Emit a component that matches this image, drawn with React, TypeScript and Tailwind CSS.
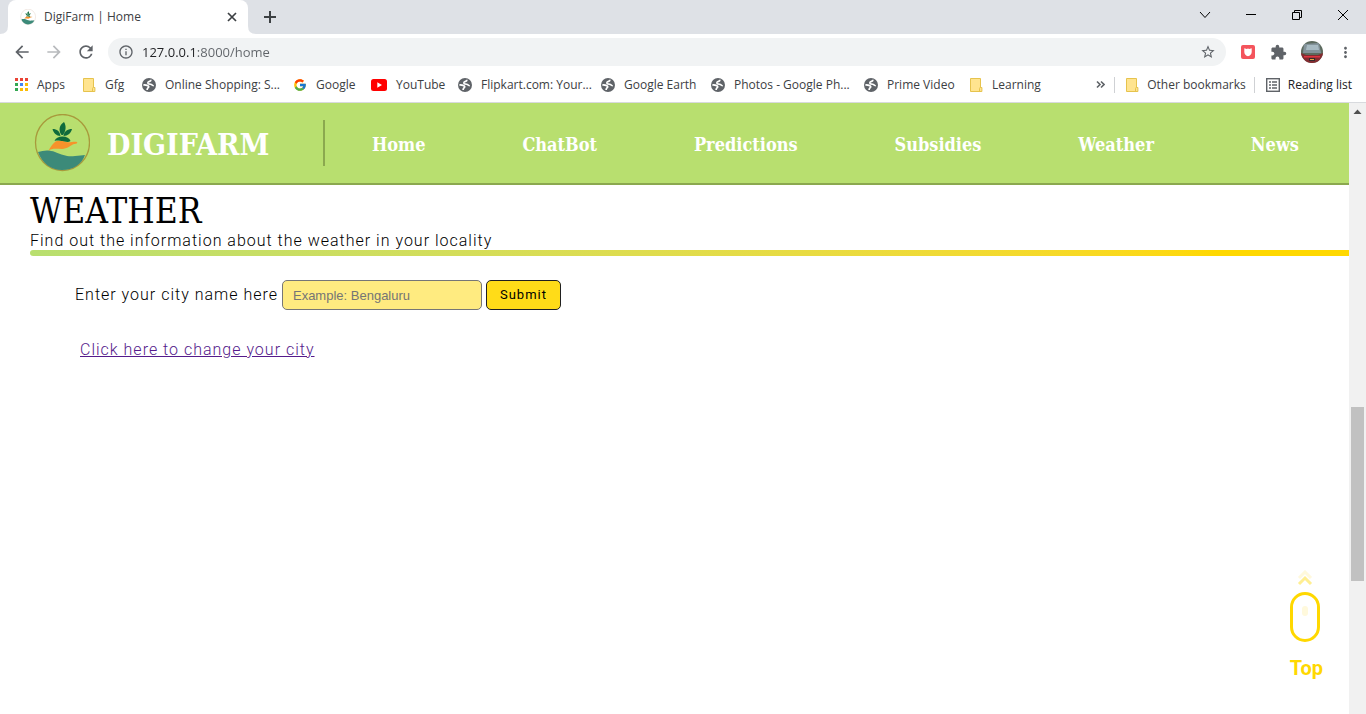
import React from "react";
import {
  MdArrowBack,
  MdArrowForward,
  MdExtension,
  MdInfoOutline,
  MdMoreVert,
  MdRefresh,
  MdStarBorder,
} from "react-icons/md";
import { FcGoogle } from "react-icons/fc";

function FarmLogo({ className, ring = "#a89a3c", fill = "none" }: { className: string; ring?: string; fill?: string }) {
  return (
    <svg className={className} viewBox="0 0 56 58" aria-hidden="true">
      <ellipse cx="28.500" cy="28.500" rx="27" ry="28" fill={fill} stroke={ring} strokeWidth="1.3" />
      <path d="M4 38c6-2 12-2 17 0 8 3 12 5 20 4 4 0 7-1 10-1-3 9-12 15-23 15C17 56 8 49 4 38z" fill="#3c8a79" />
      <path d="M14 37c2-2 3-6 7-9 3-2 8-1 11 0 4 1 8-1 11 0 1 1-1 2-3 2-3 1-7 5-12 5-6 0-10-1-14 2z" fill="#f7922b" />
      <path d="M20.500 27c1-3 4-4.500 8-4.500s7 1.500 8 4.500c-3 2-6 0-8 0s-5-1-8 0z" fill="#0f6b3c" />
      <path d="M27.500 21c-3.500-5-2-10 2.500-13 2.500 4 2 9-1 13zM26.500 22c-4 0-7-3-8-7 4.500 0 7.500 2.500 8 7zM29.500 22c.5-4.500 4-7 8.500-7-1 4-4 7-8.500 7z" fill="#0f6b3c" />
    </svg>
  );
}

function Globe() {
  return (
    <svg className="size-[14px]" viewBox="0 0 14 14" aria-hidden="true">
      <circle cx="7" cy="7" r="7" fill="#5f6368" />
      <path
        d="M9 1.800C9 3 8.300 3.300 7 3.600c-1.500.4-1.500 2-.3 2.300l1.800.3c1.600.3 2 1.400 3.300 1.600"
        fill="none"
        stroke="#fff"
        strokeWidth="1.600"
      />
      <path d="M1.400 6.800c2 .2 4.800.2 5.300 1.800.3 1.200-1.500 1-1.600 3.400" fill="none" stroke="#fff" strokeWidth="1.700" />
    </svg>
  );
}

function Folder() {
  return (
    <svg className="h-[14px] w-[13px]" viewBox="0 0 13 14" aria-hidden="true">
      <path d="M.5.5h10v9h1.400v4H.5z" fill="#ffe48f" stroke="#e6c34d" />
      <path d="M9.500 13.500V10.500q0-1 1-1" fill="none" stroke="#e6c34d" />
    </svg>
  );
}

function AppsGrid() {
  const colors = ["#ea4335", "#ea4335", "#ea4335", "#34a853", "#4285f4", "#fbbc05", "#34a853", "#fbbc05", "#fbbc05"];
  return (
    <svg className="size-[13px]" viewBox="0 0 13 13" aria-hidden="true">
      {colors.map((c, i) => (
        <rect key={i} x={(i % 3) * 5} y={Math.floor(i / 3) * 5} width="3" height="3" fill={c} />
      ))}
    </svg>
  );
}

function YouTube() {
  return (
    <svg className="h-[12px] w-[16px]" viewBox="0 0 16 12" aria-hidden="true">
      <rect width="16" height="12" rx="2.500" fill="#f00" />
      <path d="M6.300 3.300v5.400L11 6z" fill="#fff" />
    </svg>
  );
}

const bookmarks = [
  { label: "Apps", icon: <AppsGrid />, width: "w-[68px]" },
  { label: "Gfg", icon: <Folder />, width: "w-[59px]" },
  { label: "Online Shopping: S...", icon: <Globe />, width: "w-[151px]" },
  { label: "Google", icon: <FcGoogle className="size-[14px]" aria-hidden="true" />, width: "w-[78px]" },
  { label: "YouTube", icon: <YouTube />, width: "w-[87px]" },
  { label: "Flipkart.com: Your...", icon: <Globe />, width: "w-[143px]" },
  { label: "Google Earth", icon: <Globe />, width: "w-[110px]" },
  { label: "Photos - Google Ph...", icon: <Globe />, width: "w-[153px]" },
  { label: "Prime Video", icon: <Globe />, width: "w-[106px]" },
  { label: "Learning", icon: <Folder />, width: "w-[80px]" },
];

function TabStrip() {
  return (
    <div className="flex h-[34px] bg-[#dee1e6] pl-2">
      <div className="relative flex w-[240px] items-center rounded-t-lg bg-white pl-3 pr-[11px]">
        <svg className="absolute -left-2 bottom-0 size-2" viewBox="0 0 8 8" aria-hidden="true">
          <path d="M8 0v8H0q8 0 8-8z" fill="#fff" />
        </svg>
        <svg className="absolute -right-2 bottom-0 size-2" viewBox="0 0 8 8" aria-hidden="true">
          <path d="M0 0v8h8Q0 8 0 0z" fill="#fff" />
        </svg>
        <FarmLogo className="size-4" ring="#d9c3b5" fill="#fff" />
        <span className="ml-2 flex-1 whitespace-nowrap text-[12px]">DigiFarm | Home</span>
        <button aria-label="Close tab" className="text-[#3c4043]">
          <svg className="size-[10px]" viewBox="0 0 10 10" aria-hidden="true">
            <path d="M1 1l8 8M9 1L1 9" stroke="currentColor" strokeWidth="1.700" />
          </svg>
        </button>
      </div>
      <button aria-label="New tab" className="ml-4 text-[#3c4043]">
        <svg className="size-3" viewBox="0 0 12 12" aria-hidden="true">
          <path d="M6 0v12M0 6h12" stroke="currentColor" strokeWidth="2" />
        </svg>
      </button>
      <div className="mb-[5px] ml-auto flex text-black">
        <button aria-label="Search tabs" className="grid w-[46px] place-items-center">
          <svg className="size-[12px]" viewBox="0 0 12 12" aria-hidden="true">
            <path d="M1 3l5 5.500L11 3" fill="none" stroke="currentColor" />
          </svg>
        </button>
        <button aria-label="Minimize" className="grid w-[46px] place-items-center">
          <svg className="size-[10px]" viewBox="0 0 10 10" aria-hidden="true">
            <path d="M0 4.500h10" stroke="currentColor" />
          </svg>
        </button>
        <button aria-label="Restore" className="grid w-[46px] place-items-center">
          <svg className="size-[10px]" viewBox="0 0 10 10" aria-hidden="true">
            <path d="M.5 2.500h7v7h-7zM2.500 2.500v-2h7v7h-2" fill="none" stroke="currentColor" />
          </svg>
        </button>
        <button aria-label="Close" className="grid w-[46px] place-items-center">
          <svg className="size-[10px]" viewBox="0 0 10 10" aria-hidden="true">
            <path d="M0 0l10 10M10 0L0 10" stroke="currentColor" />
          </svg>
        </button>
      </div>
    </div>
  );
}

function Toolbar() {
  return (
    <div className="flex h-9 items-center pl-3 pr-3 text-[#5f6368]">
      <button aria-label="Back" className="w-8">
        <MdArrowBack className="size-5" />
      </button>
      <button aria-label="Forward" className="w-8 text-[#b8babd]">
        <MdArrowForward className="size-5" />
      </button>
      <button aria-label="Reload" className="w-8">
        <MdRefresh className="size-5" />
      </button>
      <div className="flex h-7 flex-1 items-center rounded-full bg-[#f1f3f4] px-[10px]">
        <MdInfoOutline className="size-4" />
        <input
          aria-label="Address"
          defaultValue="127.0.0.1:8000/home"
          className="ml-2 min-w-0 flex-1 bg-linear-to-r from-[#202124] from-[55px] to-[#5f6368] to-[55px] bg-clip-text text-[13px] leading-5 text-transparent caret-[#202124] outline-none"
        />
        <button aria-label="Bookmark this page">
          <MdStarBorder className="size-4" />
        </button>
      </div>
      <div className="ml-[14px] flex items-center gap-[14px]">
        <button aria-label="Pocket">
          <svg className="size-4" viewBox="0 0 16 16" aria-hidden="true">
            <rect x="1" y="1" width="14" height="14" rx="2" fill="#f4545c" />
            <path d="M4.300 4.300l2.500.6L8 4.500l1.200.4 2.500-.6V8c0 2.200-1.600 3.700-3.700 4.200C5.900 11.700 4.300 10.200 4.300 8z" fill="#fff" />
          </svg>
        </button>
        <button aria-label="Extensions">
          <MdExtension className="size-[17px]" />
        </button>
        <button aria-label="Profile">
          <svg className="size-[22px]" viewBox="0 0 22 22" aria-hidden="true">
            <defs>
              <clipPath id="avatar">
                <circle cx="11" cy="11" r="11" />
              </clipPath>
            </defs>
            <g clipPath="url(#avatar)">
              <rect width="22" height="22" fill="#5c6a5e" />
              <path d="M3 3l15-1 2 10H2z" fill="#83939a" />
              <path d="M6 4h11l1 5H5z" fill="#a7bac2" />
              <path d="M0 12l5 2h12l5-2v10H0z" fill="#842b30" />
              <path d="M3 15h16v1.500H3z" fill="#dd3540" />
              <path d="M8 17h6v3H8z" fill="#342a2d" />
              <path d="M9 18h4v1H9z" fill="#e3a640" />
            </g>
          </svg>
        </button>
        <button aria-label="Menu">
          <MdMoreVert className="size-[17px]" />
        </button>
      </div>
    </div>
  );
}

function BookmarkBar() {
  return (
    <div className="flex h-[33px] items-center border-b border-[#d8dade] pb-[3px] pl-[15px] pr-[14px] text-[12px] text-[#3c4043]">
      {bookmarks.map((b) => (
        <a key={b.label} href="#" className={`flex shrink-0 items-center gap-[9px] whitespace-nowrap ${b.width}`}>
          {b.icon}
          {b.label}
        </a>
      ))}
      <div className="ml-auto flex items-center whitespace-nowrap">
        <button aria-label="More bookmarks" className="mr-[9px]">
          <svg className="size-[9px]" viewBox="0 0 9 9" aria-hidden="true">
            <path d="M1 1.500l3 3-3 3M5 1.500l3 3-3 3" fill="none" stroke="#5f6368" strokeWidth="1.600" />
          </svg>
        </button>
        <a href="#" className="flex h-4 items-center gap-2 border-l border-[#cfd1d4] pl-[11px] pr-2">
          <Folder />
          Other bookmarks
        </a>
        <button className="flex h-4 items-center gap-2 border-l border-[#cfd1d4] pl-[11px] text-[#202124]">
          <svg className="size-[14px]" viewBox="0 0 14 14" aria-hidden="true">
            <rect x=".7" y=".7" width="12.600" height="12.600" fill="none" stroke="#5f6368" strokeWidth="1.400" />
            <path d="M3 4h2M3 7h2M3 10h2M6 4h5M6 7h5M6 10h5" stroke="#5f6368" strokeWidth="1.300" />
          </svg>
          Reading list
        </button>
      </div>
    </div>
  );
}

function SiteHeader() {
  return (
    <header className="flex h-[82px] items-center border-b-2 border-[#8ba84f] bg-[#b8df6f] font-['DejaVu_Serif_Condensed','DejaVu_Serif',serif] font-bold text-white">
      <a href="#" className="flex w-[323px] shrink-0 items-center pl-[34px]">
        <FarmLogo className="h-[58px] w-[56px]" />
        <span className="ml-[17px] pt-[3px] text-[30px] leading-9">DIGIFARM</span>
      </a>
      <div className="h-[46px] w-[2px] bg-[#8ba84f]" />
      <nav className="flex flex-1 justify-between pl-[47px] pr-[50px] pt-[3px] text-[18px] leading-6">
        {["Home", "ChatBot", "Predictions", "Subsidies", "Weather", "News"].map((item) => (
          <a key={item} href="#">
            {item}
          </a>
        ))}
      </nav>
    </header>
  );
}

function WeatherSection() {
  return (
    <main className="pl-[30px] pt-[6px] font-[Roboto,sans-serif] text-[16px] font-light tracking-[1px] text-black">
      <h1 className="font-['DejaVu_Serif_Condensed','DejaVu_Serif',serif] text-[35px] font-normal leading-10 tracking-normal">
        WEATHER
      </h1>
      <p className="leading-[19px]">Find out the information about the weather in your locality</p>
      <div className="h-[6px] rounded-l-[3px] bg-linear-to-r from-[#b8df6f] to-[#ffd800] to-90%" />
      <form className="mt-6 flex items-center gap-1 pl-[45px]" onSubmit={(e) => e.preventDefault()}>
        <label htmlFor="city">Enter your city name here</label>
        <input
          id="city"
          placeholder="Example: Bengaluru"
          className="h-[30px] w-[200px] rounded-[5px] border border-[#767676] bg-[#ffeb80] px-[10px] font-['Liberation_Sans',sans-serif] text-[13px] font-normal tracking-normal placeholder:text-[#757575]"
        />
        <button className="h-[30px] rounded-[5px] border border-[#202020] bg-[#ffdc18] px-[13px] text-[13px] font-normal">
          Submit
        </button>
      </form>
      <a href="#" className="ml-[50px] mt-[30px] inline-block leading-[19px] text-[#551a8b] underline">
        Click here to change your city
      </a>
    </main>
  );
}

function BackToTop() {
  return (
    <a href="#" className="absolute bottom-8 right-[26px] flex flex-col items-center text-[#ffd800]">
      <svg className="h-[72px] w-8" viewBox="0 0 32 72" fill="none" aria-hidden="true">
        <path d="M9 8l6-6 6 6" stroke="#fff9dc" strokeWidth="3" />
        <path d="M9 14l6-6 6 6" stroke="#ffee91" strokeWidth="3" />
        <rect x="1.500" y="23.500" width="27" height="47" rx="13.500" stroke="#ffd800" strokeWidth="3" />
        <rect x="12" y="36" width="6" height="10" rx="3" fill="#fff9dc" />
      </svg>
      <span className="mt-3 font-[Roboto,sans-serif] text-[20px] font-bold leading-7">Top</span>
    </a>
  );
}

function ScrollRail() {
  return (
    <div className="flex w-[17px] shrink-0 flex-col items-center bg-[#f1f1f1]" aria-hidden="true">
      <svg className="size-[17px] shrink-0" viewBox="0 0 17 17">
        <path d="M4.500 11l4-4.500L12.500 11z" fill="#505050" />
      </svg>
      <div className="grow-[287]" />
      <div className="w-[13px] grow-[174] bg-[#c1c1c1]" />
      <div className="grow-[133]" />
    </div>
  );
}

export default function App() {
  return (
    <div className="flex min-h-screen flex-col bg-white font-['Open_Sans',sans-serif] text-[#3c4043]">
      <TabStrip />
      <Toolbar />
      <BookmarkBar />
      <div className="flex flex-1">
        <div className="relative min-w-0 flex-1">
          <SiteHeader />
          <WeatherSection />
          <BackToTop />
        </div>
        <ScrollRail />
      </div>
    </div>
  );
}
